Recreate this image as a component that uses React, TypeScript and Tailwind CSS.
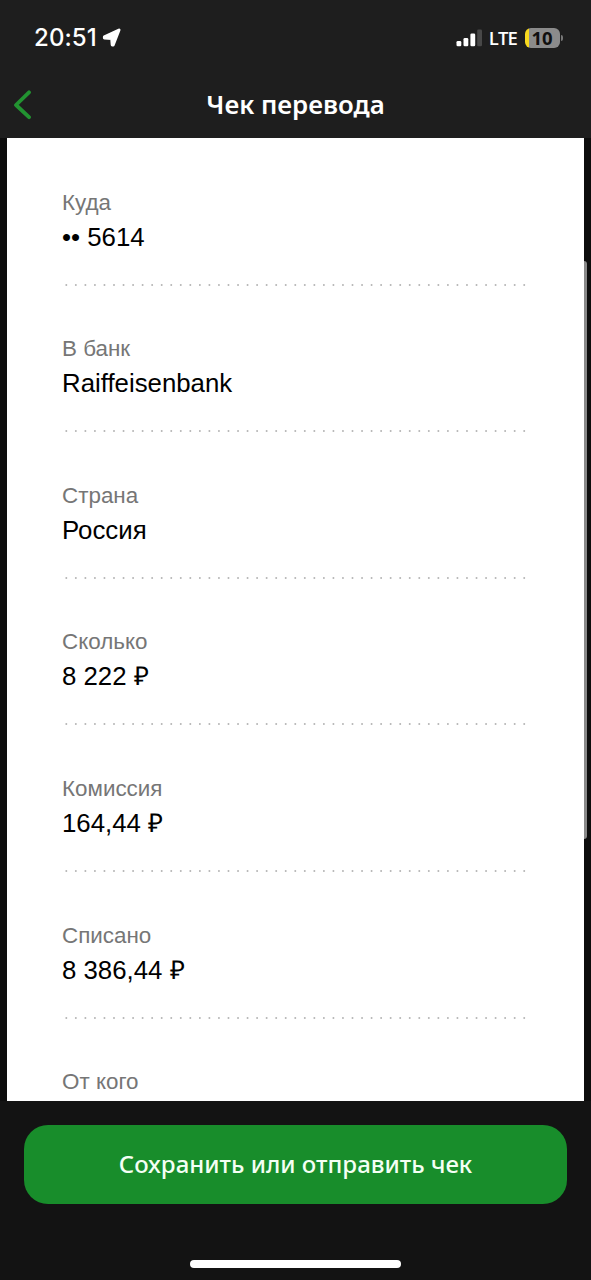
interface ReceiptField {
  label: string;
  value?: string;
}

const fields: ReceiptField[] = [
  { label: "Куда", value: "•• 5614" },
  { label: "В банк", value: "Raiffeisenbank" },
  { label: "Страна", value: "Россия" },
  { label: "Сколько", value: "8 222 ₽" },
  { label: "Комиссия", value: "164,44 ₽" },
  { label: "Списано", value: "8 386,44 ₽" },
  { label: "От кого" },
];

function StatusBar() {
  return (
    <div className="flex h-[76px] shrink-0 items-center justify-between pl-[34px] pr-[28px] text-white">
      <div className="flex items-center gap-[5px]">
        <span className="font-['Inter',sans-serif] text-[24px] leading-[30px] font-medium tracking-[0.1px]">
          20:51
        </span>
        <svg className="mb-px h-[19px] w-[19px]" viewBox="0 0 19 19" fill="currentColor">
          <path
            d="M17 2 11.2 17H10.2L9.7 10.4 2.4 9.9V8.9Z"
            stroke="currentColor"
            strokeWidth="3"
            strokeLinejoin="round"
          />
        </svg>
      </div>

      <div className="flex items-center">
        <svg className="h-[18px] w-[26px]" viewBox="0 0 26 18" fill="currentColor">
          <rect x="0.5" y="12" width="4.8" height="5.2" rx="1.3" />
          <rect x="7.5" y="9" width="4.8" height="8.2" rx="1.3" />
          <rect x="14.4" y="4.5" width="4.8" height="12.7" rx="1.3" />
          <rect x="21.2" y="0.5" width="4.8" height="16.7" rx="1.3" fill="#484848" />
        </svg>
        <span className="ml-[7px] pb-px font-['Open_Sans',sans-serif] text-[18.5px] leading-[24px] font-semibold tracking-[-0.9px]">
          LTE
        </span>
        <div className="mb-px ml-[8px] h-[20px] w-[35px] rounded-[6px] bg-[linear-gradient(to_right,#f8d91e_4px,#8b8b8b_4px)] pl-[4px] pr-[5px] text-center font-['Noto_Sans',sans-serif] text-[18.5px] leading-[19px] font-bold text-[#101010]">
          10
        </div>
        <div className="mb-px ml-[1px] h-[6px] w-[2px] rounded-r-full bg-[#777777]" />
      </div>
    </div>
  );
}

function Header() {
  return (
    <div className="grid h-[62px] shrink-0 grid-cols-[60px_1fr_60px] items-center">
      <svg
        className="ml-[13px] mb-[5px] h-[30px] w-[20px]"
        viewBox="0 0 20 30"
        fill="none"
        stroke="#229331"
        strokeWidth="3.8"
        strokeLinecap="round"
        strokeLinejoin="round"
      >
        <path d="M16 2.3 3 15 16 27.2" />
      </svg>
      <h1 className="pb-[7px] text-center font-['Noto_Sans',sans-serif] text-[25.8px] leading-[34px] font-semibold text-white">
        Чек перевода
      </h1>
    </div>
  );
}

function DottedLine() {
  return (
    <svg className="mt-[31px] ml-[3px] h-[2px] w-[462px]" viewBox="0 0 462 2">
      <path d="M1.3 1H460" stroke="#b5b5b5" strokeWidth="2" strokeLinecap="round" strokeDasharray="0 9.54" />
    </svg>
  );
}

function Field({ label, value }: ReceiptField) {
  return (
    <div className="h-[146.6px] shrink-0 pt-[44px]">
      <p className="text-[22.4px] leading-[28px] text-[#767676]">{label}</p>
      {value && (
        <>
          <p className="mt-1 text-[25.8px] leading-[32px] text-black">{value}</p>
          <DottedLine />
        </>
      )}
    </div>
  );
}

export default function App() {
  return (
    <div className="flex h-[1280px] w-[591px] flex-col overflow-hidden bg-[#131313]">
      <div className="bg-[#1e1e1e]">
        <StatusBar />
        <Header />
      </div>

      <div className="flex h-[963px] shrink-0 bg-[#0d0d0d] pl-[7px]">
        <div className="flex w-[577px] flex-col overflow-hidden bg-white pt-[6.7px] pl-[55px] font-['Liberation_Sans',sans-serif]">
          {fields.map((field) => (
            <Field key={field.label} {...field} />
          ))}
        </div>
        <div className="mt-[123px] h-[578px] w-[3px] rounded-r-full bg-[#898989]" />
      </div>

      <div className="flex flex-1 flex-col items-center px-[24px] pt-[24px]">
        <button className="h-[79px] w-full rounded-[24px] bg-[#188d2b] pb-[2px] font-['Noto_Sans',sans-serif] text-[24px] font-medium text-[#f4fff4]">
          Сохранить или отправить чек
        </button>
        <div className="mt-[56px] h-[8px] w-[211px] rounded-full bg-white" />
      </div>
    </div>
  );
}
